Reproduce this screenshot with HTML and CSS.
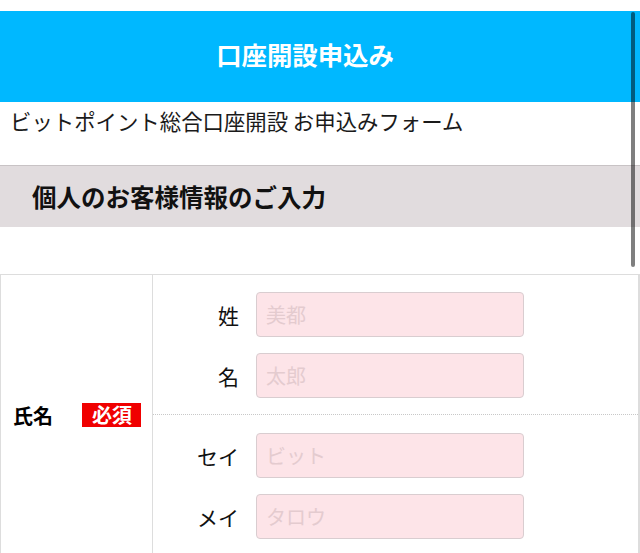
FILE: index.html
```html
<!DOCTYPE html>
<html lang="ja">
<head>
<meta charset="utf-8">
<title>口座開設申込み</title>
<link rel="stylesheet" href="styles.css">
</head>
<body>
<div class="page">
  <header class="topbar"><h1 class="title">口座開設申込み</h1></header>
  <p class="subtitle">ビットポイント総合口座開設 お申込みフォーム</p>
  <h2 class="section">個人のお客様情報のご入力</h2>
  <div class="spacer"></div>
  <div class="form-table">
    <div class="row-head">
      <span class="label">氏名</span>
      <span class="req">必須</span>
    </div>
    <div class="row-body">
      <div class="group">
        <label class="field"><span class="field-name">姓</span><input class="text" type="text" placeholder="美都"></label>
        <label class="field"><span class="field-name">名</span><input class="text" type="text" placeholder="太郎"></label>
      </div>
      <div class="group">
        <label class="field"><span class="field-name">セイ</span><input class="text" type="text" placeholder="ビット"></label>
        <label class="field"><span class="field-name">メイ</span><input class="text" type="text" placeholder="タロウ"></label>
      </div>
    </div>
  </div>
  <div class="scroll-indicator"></div>
</div>
</body>
</html>
```

FILE: styles.css
```css
html, body {
  margin: 0;
  padding: 0;
  height: 553px;
  overflow: hidden;
  background: #fff;
}
body {
  font-family: "Noto Sans CJK JP", "Noto Sans", sans-serif;
  color: #000;
}
.page {
  position: relative;
  padding-top: 11px;
}
.topbar {
  height: 91px;
  box-sizing: border-box;
  padding: 0 30px 4px 0;
  background: #00b8ff;
  display: flex;
  align-items: center;
  justify-content: center;
}
.title {
  margin: 0;
  color: #fff;
  font-size: 25.4px;
  font-weight: bold;
  line-height: 1;
}
.subtitle {
  margin: 0;
  height: 63px;
  box-sizing: border-box;
  padding: 5px 0 0 10px;
  font-size: 21.4px;
  line-height: 28px;
  color: #1a1a1a;
}
.section {
  margin: 0;
  height: 62px;
  box-sizing: border-box;
  border-top: 1px solid #c8c3c5;
  background: #e1dcde;
  display: flex;
  align-items: center;
  padding-left: 32px;
  font-size: 24.5px;
  font-weight: bold;
  color: #111;
}
.spacer {
  height: 47px;
}
.form-table {
  display: flex;
  border: 1px solid #ddd;
  border-right-width: 2px;
}
.row-head {
  width: 152px;
  flex: none;
  box-sizing: border-box;
  border-right: 1px solid #ddd;
  display: flex;
  align-items: center;
  justify-content: space-between;
  padding: 0 11px 0 12px;
}
.label {
  font-size: 20px;
  font-weight: bold;
}
.req {
  background: #f00000;
  color: #fff;
  font-size: 20px;
  font-weight: bold;
  height: 24px;
  line-height: 24px;
  padding: 0 9px 0 10px;
}
.row-body {
  flex: 1;
}
.group {
  display: flex;
  flex-direction: column;
  gap: 16px;
  padding: 17px 0 16px;
}
.group + .group {
  border-top: 1px dotted #c8c8c8;
  padding-top: 18px;
}
.field {
  display: flex;
  align-items: center;
}
.field-name {
  width: 86px;
  margin-right: 17px;
  text-align: right;
  font-size: 21px;
  color: #111;
}
.text {
  width: 268px;
  height: 45px;
  box-sizing: border-box;
  border: 1px solid #d9cdd0;
  border-radius: 4px;
  background: #fde4e8;
  font-family: "Noto Sans CJK JP", "Noto Sans", sans-serif;
  font-size: 20px;
  padding: 0 9px;
  color: #333;
  outline: none;
}
.text::placeholder {
  color: #e4cbcf;
}
.scroll-indicator {
  position: absolute;
  left: 631px;
  top: 12px;
  width: 4px;
  height: 255px;
  border-radius: 2px;
  background: rgba(0, 0, 0, 0.5);
}
```
